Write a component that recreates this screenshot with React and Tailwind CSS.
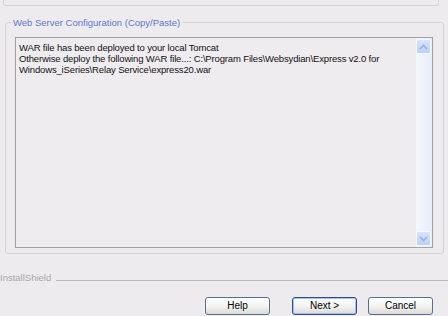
import React from 'react';

const font = { fontFamily: '"Liberation Sans", Arial, sans-serif' };

const ArrowBtn = ({ up }) => (
  <div className="h-[15px] w-full rounded-[2px] border border-[#f4f8ff] bg-gradient-to-b from-[#d8e4fc] to-[#bcd0f8] flex items-center justify-center">
    <svg width="9" height="6" viewBox="0 0 9 6">
      <path
        d={up ? 'M1 5 L4.5 1.5 L8 5' : 'M1 1 L4.5 4.5 L8 1'}
        fill="none"
        stroke="#9db2e0"
        strokeWidth="1.6"
      />
    </svg>
  </div>
);

const XpButton = ({ children, primary }) => (
  <button
    className={`w-[65px] h-[18px] rounded-[3px] border text-[10px] leading-none text-black bg-gradient-to-b from-white via-[#f4f4f2] to-[#dcdad6] ${
      primary
        ? 'border-[#2d4d8c] shadow-[inset_0_0_0_1px_#a8c0ee]'
        : 'border-[#5a6e94]'
    }`}
  >
    {children}
  </button>
);

export default function App() {
  return (
    <div
      className="w-[448px] h-[316px] overflow-hidden bg-[#eeebee] flex flex-col"
      style={font}
    >
      {/* remnant of the upper group box */}
      <div className="mx-[3px] mr-[9px] h-[6px] border-x border-b border-[#d6d3d6] rounded-b-[3px]" />

      {/* group box */}
      <fieldset className="mt-[11px] ml-[5px] mr-[4px] border border-[#d6d3d6] rounded-[3px] pl-[9px] pr-[10px] pb-[5px]">
        <legend className="-ml-[4px] px-[2px] text-[9.5px] leading-[11px] text-[#5b78d0]">
          Web Server Configuration (Copy/Paste)
        </legend>
        <div className="mt-[9px] h-[211px] flex border border-[#a3a0a3] bg-[#efecef]">
          <div className="flex-1 pl-[3px] pt-[4px] text-[9.5px] tracking-[-0.15px] leading-[11px] text-[#111] whitespace-nowrap overflow-hidden">
            <div>WAR file has been deployed to your local Tomcat</div>
            <div>
              Otherwise deploy the following WAR file...: C:\Program Files\Websydian\Express v2.0 for
            </div>
            <div>Windows_iSeries\Relay Service\express20.war</div>
          </div>
          <div className="w-[16px] flex flex-col justify-between bg-gradient-to-r from-[#f3f7fe] to-[#e6eefc] py-[1px] pr-[1px]">
            <ArrowBtn up />
            <ArrowBtn />
          </div>
        </div>
      </fieldset>

      {/* InstallShield separator */}
      <div className="mt-[18px] flex items-end">
        <span className="text-[9.5px] leading-[11px] text-[#a9a6a9]">InstallShield</span>
        <div className="ml-[5px] flex-1 mb-[1px] h-[2px] border-t border-[#bcb9bc] border-b-white" />
      </div>

      {/* buttons */}
      <div className="mt-[14px] flex justify-end gap-[22px] pr-[15px]">
        <XpButton>Help</XpButton>
        <div className="flex gap-[11px]">
          <XpButton primary>Next &gt;</XpButton>
          <XpButton>Cancel</XpButton>
        </div>
      </div>
    </div>
  );
}
